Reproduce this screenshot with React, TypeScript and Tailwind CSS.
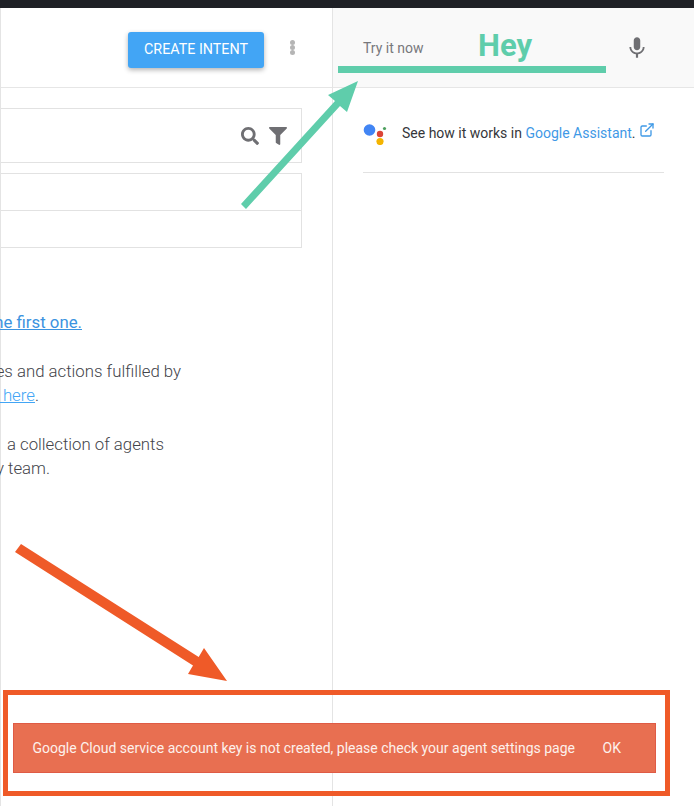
import React from 'react';
import { ExternalLink } from 'lucide-react';
import { FaFilter, FaSearch } from 'react-icons/fa';
import { MdMic } from 'react-icons/md';

function Annotations() {
  return (
    <svg
      className="pointer-events-none absolute left-0 top-0"
      width={694}
      height={806}
      viewBox="0 0 694 806"
      fill="none"
    >
      <path
        d="M241 204L335 101L328 95L358 81L347 112L340 106L246 209Z"
        fill="#5fcdab"
      />
      <path
        d="M21 544L15 552L193 665.5L188 674L227 681L204 648L198.7 657Z"
        fill="#ef5a28"
      />
    </svg>
  );
}

function App() {
  return (
    <div
      className="relative h-[806px] w-[694px] overflow-hidden bg-white font-['Roboto',sans-serif]"
    >
      <div className="h-2 bg-[#1f2126]" />
      <div className="flex h-[798px]">
        {/* intents list, cut off on the left */}
        <div className="w-[333px] shrink-0 border-x border-[#e4e4e4]">
          <div className="flex h-[80px] items-start justify-end border-b border-[#e6e6e6] pr-[37px] pt-6">
            <button
              type="button"
              className="h-9 w-[136px] rounded-[3px] bg-[#42a5f5] text-[14.3px] text-white shadow-[0_2px_5px_rgba(0,0,0,0.3)]"
            >
              CREATE INTENT
            </button>
            <div className="ml-[26px] mt-[8px] flex flex-col">
              <span className="size-[5px] rounded-full bg-[#b5b5b5]" />
              <span className="size-[5px] rounded-full bg-[#b5b5b5]" />
              <span className="size-[5px] rounded-full bg-[#b5b5b5]" />
            </div>
          </div>

          <div className="mr-[30px] mt-5 flex h-[55px] items-center justify-end gap-[10px] border border-l-0 border-[#e2e2e2] pr-[14px] text-[#6f6f73]">
            <FaSearch size={18} />
            <FaFilter size={18} />
          </div>
          <div className="mr-[30px] mt-[10px] border border-l-0 border-[#e2e2e2]">
            <div className="h-[37px] border-b border-[#e2e2e2]" />
            <div className="h-[36px]" />
          </div>

          <div className="mt-[62px] text-[16.8px] font-light leading-6 text-[#43444a]">
            <div className="flex w-[81px] justify-end whitespace-nowrap">
              <a className="font-normal text-[#3b93e0] underline">Create the first one.</a>
            </div>
            <div className="mt-[25px] flex w-[180px] justify-end whitespace-nowrap">
              Intents match user phrases and actions fulfilled by
            </div>
            <div className="flex w-[38px] justify-end whitespace-nowrap">
              <span>
                <a className="text-[#42a5f5] underline">Learn more here</a>.
              </span>
            </div>
            <div className="mt-[25px] flex w-[163px] justify-end whitespace-pre">
              Prebuilt agents  a collection of agents
            </div>
            <div className="flex w-[49px] justify-end whitespace-nowrap">
              ready for any team.
            </div>
          </div>
        </div>

        {/* try it now panel */}
        <div className="flex-1">
          <div className="flex h-[80px] items-start border-b border-[#e6e6e6] bg-[#f9f9f9] pl-[30px] pt-[31px]">
            <span className="w-[115px] text-[14px] leading-[18px] text-[#77787c]">Try it now</span>
            <span className="-mt-[16px] text-[31px] font-bold leading-[46px] text-[#5fcdab]">Hey</span>
            <MdMic size={26} className="ml-[92px] -mt-[4px] text-[#6f6f73]" />
          </div>
          <div className="mt-5 flex h-[65px] items-start border-b border-[#e2e2e2] ml-[30px] mr-[30px] pt-[15px]">
            <svg width={24} height={22} viewBox="0 0 24 22" className="shrink-0">
              <circle cx="6.5" cy="7" r="5.8" fill="#4285f4" />
              <circle cx="17" cy="11" r="3.2" fill="#db4437" />
              <circle cx="17" cy="18.5" r="3.6" fill="#f4b400" />
              <circle cx="21.5" cy="5.5" r="1.6" fill="#4c9f5d" />
            </svg>
            <p className="ml-[15px] flex items-start whitespace-nowrap text-[14px] leading-5 text-[#35363a]">
              <span>
                See how it works in <a className="text-[#3f99e6]">Google Assistant</a>.
              </span>
              <ExternalLink size={16} className="ml-[3px] mt-[-1px] text-[#3f99e6]" />
            </p>
          </div>
        </div>
      </div>

      {/* green underline drawn on top of the tab */}
      <div className="absolute left-[338px] top-[66px] h-[7px] w-[268px] bg-[#5fcdab]" />
      <Annotations />

      {/* snackbar inside the orange frame */}
      <div className="absolute left-[3px] top-[690px] h-[106px] w-[667px] border-[5px] border-[#ef5a28] pl-[5px] pr-[9px] pt-[28px]">
        <div className="flex h-[50px] items-center justify-between border border-[#df5b45] bg-[#e86f51] pl-[18.5px] pr-[34px] text-[14px] text-[#fdf1ec]">
          <span>Google Cloud service account key is not created, please check your agent settings page</span>
          <span>OK</span>
        </div>
      </div>
    </div>
  );
}

export default App;
